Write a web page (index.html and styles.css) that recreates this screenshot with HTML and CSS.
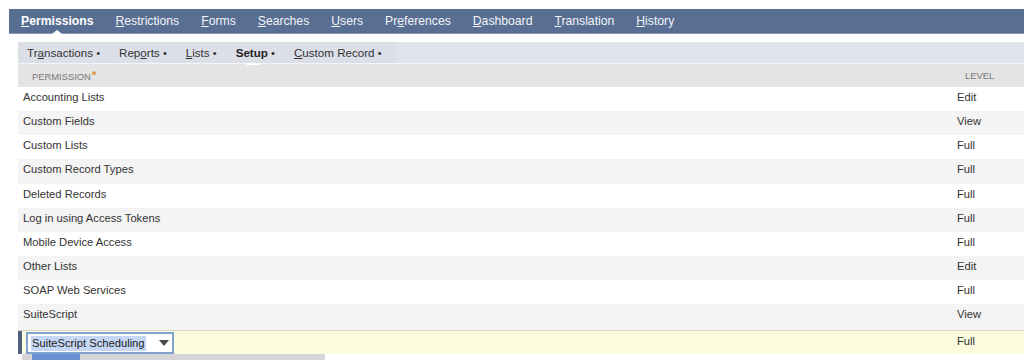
FILE: index.html
```html
<!DOCTYPE html>
<html>
<head>
<meta charset="utf-8">
<link rel="stylesheet" href="styles.css">
</head>
<body>
<div class="page">
  <nav class="tabs">
    <span class="tab active"><u>P</u>ermissions</span>
    <span class="tab"><u>R</u>estrictions</span>
    <span class="tab"><u>F</u>orms</span>
    <span class="tab"><u>S</u>earches</span>
    <span class="tab"><u>U</u>sers</span>
    <span class="tab">Pr<u>e</u>ferences</span>
    <span class="tab"><u>D</u>ashboard</span>
    <span class="tab"><u>T</u>ranslation</span>
    <span class="tab"><u>H</u>istory</span>
  </nav>
  <div class="content">
    <div class="subtabs">
      <div class="subtab-group">
        <span class="subtab">Tr<u>a</u>nsactions <b class="dot">•</b></span>
        <span class="subtab">Rep<u>o</u>rts <b class="dot">•</b></span>
        <span class="subtab"><u>L</u>ists <b class="dot">•</b></span>
        <span class="subtab current">Setup <b class="dot">•</b></span>
        <span class="subtab"><u>C</u>ustom Record <b class="dot">•</b></span>
      </div>
    </div>
    <div class="table">
      <div class="row head">
        <span class="cell perm">PERMISSION<span class="req">*</span></span>
        <span class="cell level">LEVEL</span>
      </div>
      <div class="row"><span class="cell perm">Accounting Lists</span><span class="cell level">Edit</span></div>
      <div class="row alt"><span class="cell perm">Custom Fields</span><span class="cell level">View</span></div>
      <div class="row"><span class="cell perm">Custom Lists</span><span class="cell level">Full</span></div>
      <div class="row alt"><span class="cell perm">Custom Record Types</span><span class="cell level">Full</span></div>
      <div class="row"><span class="cell perm">Deleted Records</span><span class="cell level">Full</span></div>
      <div class="row alt"><span class="cell perm">Log in using Access Tokens</span><span class="cell level">Full</span></div>
      <div class="row"><span class="cell perm">Mobile Device Access</span><span class="cell level">Full</span></div>
      <div class="row alt"><span class="cell perm">Other Lists</span><span class="cell level">Edit</span></div>
      <div class="row"><span class="cell perm">SOAP Web Services</span><span class="cell level">Full</span></div>
      <div class="row alt before-edit"><span class="cell perm">SuiteScript</span><span class="cell level">View</span></div>
      <div class="row editing">
        <span class="cell perm">
          <span class="select"><span class="sel-text">SuiteScript Scheduling</span><span class="arrow"></span></span>
        </span>
        <span class="cell level">Full</span>
      </div>
      <div class="dropdown"><span class="dd-hl"></span></div>
    </div>
  </div>
</div>
</body>
</html>
```
FILE: styles.css
```css
html, body {
  margin: 0;
  padding: 0;
  background: #ffffff;
}
body {
  font-family: "Liberation Sans", Arial, sans-serif;
  font-size: 11.2px;
  color: #333333;
  overflow: hidden;
}
.page {
  padding: 9px 0 0 9px;
}
.tabs {
  display: flex;
  align-items: center;
  height: 24px;
  background: #586e92;
  border-bottom: 1px solid #8b9ab4;
  padding-left: 1px;
}
.tab {
  position: relative;
  color: #f2f4f8;
  font-size: 12.2px;
  padding: 0 11px;
  line-height: 24px;
}
.tab u { text-decoration-thickness: 1px; text-underline-offset: 1px; }
.tab.active {
  font-weight: bold;
  color: #ffffff;
}
.tab.active::after {
  content: "";
  position: absolute;
  left: 50%;
  bottom: -1px;
  margin-left: -5px;
  border-left: 5px solid transparent;
  border-right: 5px solid transparent;
  border-bottom: 4px solid #ffffff;
}
.content {
  padding: 8px 0 0 9px;
}
.subtabs {
  background: #dfe3ec;
  height: 21px;
  border-bottom: 1px solid #f4f5f8;
  display: flex;
}
.subtab-group {
  display: flex;
  align-items: center;
  background: #dcdfe8;
  padding-left: 1px;
  padding-right: 3px;
}
.subtab {
  position: relative;
  padding: 0 8px;
  line-height: 21px;
  color: #333333;
  font-size: 11.6px;
  margin-right: 3px;
}
.subtab .dot {
  font-weight: normal;
  font-size: 11px;
}
.subtab.current {
  font-weight: bold;
  color: #222222;
}
.subtab.current::after {
  content: "";
  position: absolute;
  left: 50%;
  bottom: -1px;
  margin-left: -9px;
  width: 14px;
  height: 2px;
  border-radius: 2px 2px 0 0;
  background: #ffffff;
}
.table {
  display: flex;
  flex-direction: column;
}
.row {
  display: flex;
  align-items: flex-start;
  height: 24.15px;
  background: #ffffff;
  line-height: 14px;
}
.row .cell {
  padding-top: 3px;
}
.row.alt {
  background: #f4f4f4;
}
.row.before-edit {
  height: 26.15px;
}
.row.head {
  height: 23px;
  align-items: center;
  background: #e4e4e4;
  color: #7a7a7a;
  font-size: 9.4px;
}
.row.head .cell { padding-top: 0; }
.row.head .perm { padding-left: 14px; }
.row.head .level { padding-left: 15px; }
.req {
  color: #e38a2b;
  font-size: 11px;
  vertical-align: 1px;
  margin-left: 1px;
  font-weight: bold;
}
.cell {
  white-space: nowrap;
}
.perm {
  flex: 1;
  padding-left: 5px;
}
.level {
  box-sizing: border-box;
  width: 74px;
  padding-left: 7px;
}
.row.editing {
  height: 23px;
  background: #fbfbde;
  border-top: 1px solid #d9d9c8;
  box-shadow: inset 4px 0 0 #4f5f7d;
}
.row.editing .perm {
  padding-left: 8px;
  padding-top: 1px;
}
.row.editing .level {
  padding-top: 3px;
}
.select {
  display: inline-flex;
  align-items: center;
  box-sizing: border-box;
  width: 148px;
  height: 22px;
  border: 2px solid #7fa2cf;
  background: #ffffff;
  padding-left: 3px;
}
.sel-text {
  background: #c5d7f3;
  color: #1c1c1c;
  line-height: 15px;
  padding: 0 1px;
}
.arrow {
  margin-left: 13px;
  width: 0;
  height: 0;
  border-left: 5px solid transparent;
  border-right: 5px solid transparent;
  border-top: 6px solid #4a4a4a;
}
.dropdown {
  box-sizing: border-box;
  margin-left: 4px;
  width: 303px;
  height: 8px;
  background: #d5d5d5;
  padding-left: 10px;
}
.dd-hl {
  display: block;
  width: 48px;
  height: 8px;
  background: #6b8fd0;
}
```
